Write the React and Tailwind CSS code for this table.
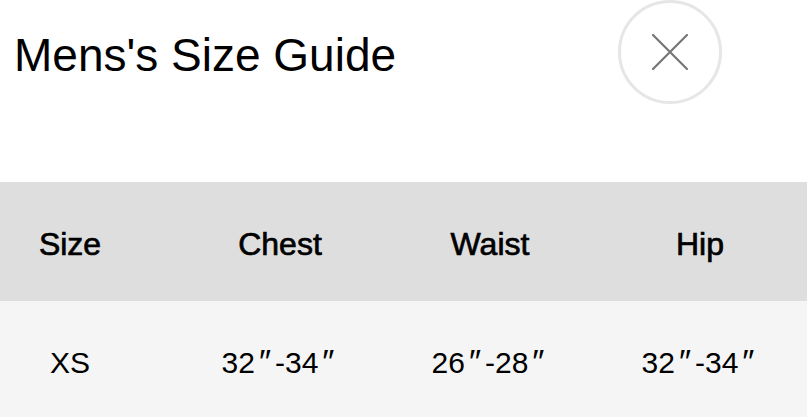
export default function App() {
  const font = { fontFamily: '"Liberation Sans", Arial, Helvetica, sans-serif' };
  const Q = () => <span className="px-[4px] text-[34px] leading-none">″</span>;
  return (
    <div className="w-[807px] h-[417px] overflow-hidden bg-white text-black" style={font}>
      <div className="flex justify-between items-start h-[182px]">
        <h1 className="pl-[14px] pt-[32px] text-[46px] leading-[46px] font-normal">Mens's Size Guide</h1>
        <button className="mt-[0px] mr-[85px] w-[104px] h-[104px] rounded-full border-[3px] border-[#e6e6e6] flex items-center justify-center bg-white">
          <svg width="36" height="36" viewBox="0 0 36 36" fill="none">
            <path d="M1 1L35 35M35 1L1 35" stroke="#777777" strokeWidth="2.2" strokeLinecap="round" />
          </svg>
        </button>
      </div>
      <div className="bg-[#dedede] h-[119px] overflow-hidden">
        <div className="grid grid-cols-4 w-[840px] -ml-[35px] h-full items-center text-center text-[32px] font-normal pt-[4px] [-webkit-text-stroke:0.7px_#000]">
          <div>Size</div>
          <div>Chest</div>
          <div>Waist</div>
          <div>Hip</div>
        </div>
      </div>
      <div className="bg-[#f5f5f5] h-[122px] overflow-hidden">
        <div className="grid grid-cols-4 w-[840px] -ml-[35px] h-full items-center text-center text-[30px] font-normal">
          <div>XS</div>
          <div>32<Q />-34<Q /></div>
          <div>26<Q />-28<Q /></div>
          <div>32<Q />-34<Q /></div>
        </div>
      </div>
    </div>
  );
}
